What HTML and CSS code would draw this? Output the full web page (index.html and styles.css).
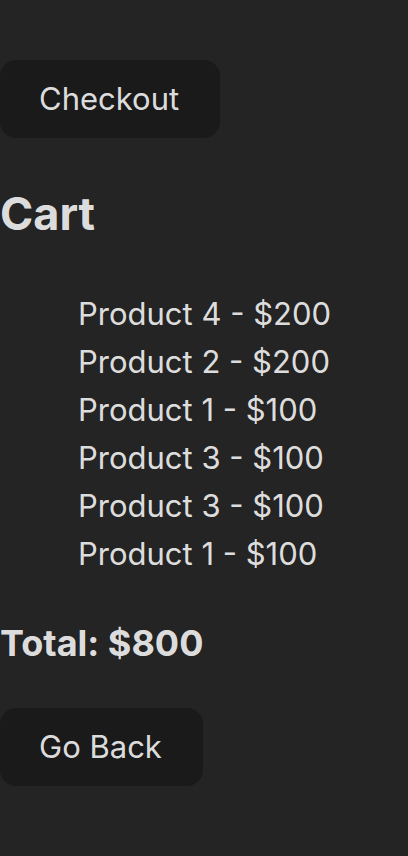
FILE: index.html
```html
<!DOCTYPE html>
<html lang="en">
<head>
<meta charset="utf-8">
<title>Cart</title>
<link rel="stylesheet" href="styles.css">
</head>
<body>
<div class="page">
  <button class="btn">Checkout</button>
  <h2 class="title">Cart</h2>
  <ul class="items">
    <li>Product 4 - $200</li>
    <li>Product 2 - $200</li>
    <li>Product 1 - $100</li>
    <li>Product 3 - $100</li>
    <li>Product 3 - $100</li>
    <li>Product 1 - $100</li>
  </ul>
  <h3 class="total">Total: $800</h3>
  <button class="btn">Go Back</button>
</div>
</body>
</html>
```
FILE: styles.css
```css
html, body {
  margin: 0;
  padding: 0;
  background: #242424;
}
body {
  font-family: Inter, "Noto Sans", sans-serif;
  color: rgba(255, 255, 255, 0.87);
  font-size: 31px;
  line-height: 48px;
  font-weight: 400;
}
.page {
  padding-top: 60px;
}
.btn {
  display: block;
  font-family: inherit;
  font-size: 31px;
  font-weight: 400;
  line-height: 46px;
  color: rgba(255, 255, 255, 0.87);
  background: #1a1a1a;
  border: 1px solid transparent;
  border-radius: 16px;
  padding: 15px 40px 15px 38px;
  margin: 0;
  cursor: pointer;
}
.title {
  font-size: 45px;
  font-weight: 700;
  line-height: 72px;
  margin: 40px 0;
}
.items {
  list-style: none;
  margin: 0;
  padding: 0 0 0 78px;
}
.total {
  font-size: 36px;
  font-weight: 700;
  line-height: 56px;
  margin: 37px 0 37px;
}
```
